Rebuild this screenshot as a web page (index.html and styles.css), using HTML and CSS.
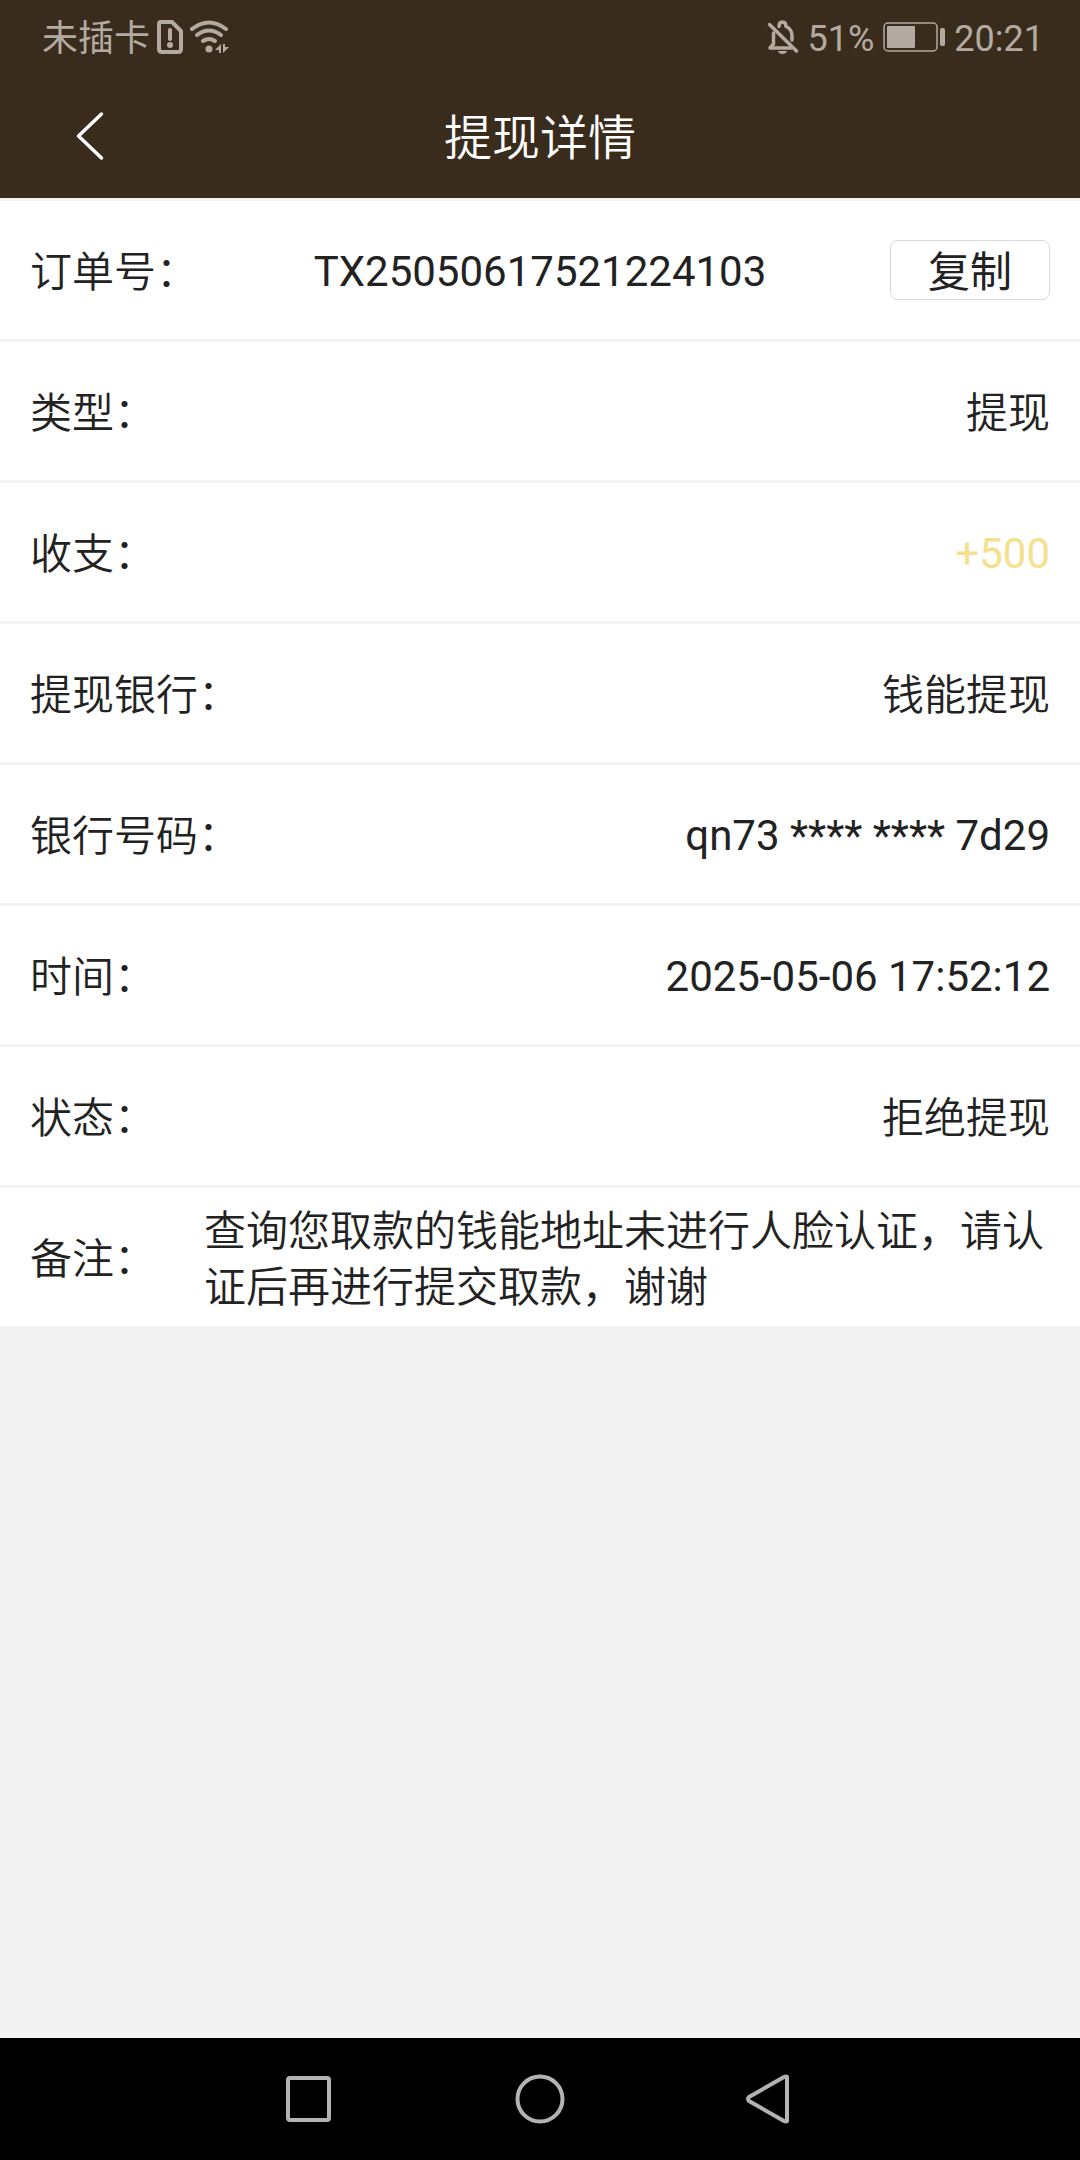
FILE: index.html
```
<!DOCTYPE html>
<html lang="zh-CN">
<head>
    <meta charset="UTF-8">
    <meta name="viewport" content="width=device-width, initial-scale=1.0">
    <title>提现详情</title>
    <link rel="stylesheet" href="styles.css">
</head>
<body>
<header class="header">
    <div class="status-bar">
        <div class="status-left">
            <span class="status-text">未插卡</span>
            <svg class="icon-sim" width="26" height="34" viewBox="0 0 26 34">
                <path d="M4 2H15L24 11V29Q24 32 21 32H5Q2 32 2 29V4Q2 2 4 2Z" fill="none" stroke="#b3aba1" stroke-width="4" stroke-linejoin="round"/>
                <path d="M13 10V19" stroke="#b3aba1" stroke-width="4" stroke-linecap="round"/>
                <circle cx="13" cy="25" r="3" fill="#b3aba1"/>
            </svg>
            <svg class="icon-wifi" width="40" height="34" viewBox="0 0 40 34">
                <g fill="none" stroke="#b3aba1" stroke-width="4" stroke-linecap="round">
                    <path d="M2 9Q19 -4 36 9"/>
                    <path d="M7 15Q19 6 31 15"/>
                    <path d="M13 21Q19 17 25 21"/>
                </g>
                <circle cx="19" cy="29" r="3.5" fill="#b3aba1"/>
                <path d="M31 24V33H29V30H25ZM33 33V24H35V27H39Z" fill="#b3aba1"/>
            </svg>
        </div>
        <div class="status-right">
            <svg class="icon-bell" width="32" height="34" viewBox="0 0 32 34">
                <g fill="none" stroke="#b3aba1" stroke-width="3.5" stroke-linecap="round" stroke-linejoin="round">
                    <path d="M2.500 4.500L29.500 31"/>
                    <path d="M6.500 13V24L3 28H24"/>
                    <path d="M12 6.500Q12 2 15.500 2T19 6.500Q25 9 25 16V20"/>
                </g>
                <path d="M11 31H20Q19 34 15.500 34T11 31Z" fill="#b3aba1"/>
            </svg>
            <span class="status-text">51%</span>
            <svg class="icon-battery" width="62" height="30" viewBox="0 0 62 30">
                <rect x="1" y="1" width="53" height="28" rx="4" fill="none" stroke="#b3aba1" stroke-width="1.500"/>
                <rect x="4" y="4" width="28" height="22" rx="1" fill="#b3aba1"/>
                <rect x="57" y="6" width="5" height="18" rx="2" fill="#b3aba1"/>
            </svg>
            <span class="status-text">20:21</span>
        </div>
    </div>
    <div class="title-bar">
        <button type="button" class="back-btn" aria-label="返回">
            <svg width="28" height="50" viewBox="0 0 28 50">
                <path d="M25.500 3L2.500 25L25.500 47" fill="none" stroke="#fff" stroke-width="3.5" stroke-linecap="round" stroke-linejoin="round"/>
            </svg>
        </button>
        <h1>提现详情</h1>
    </div>
</header>

<main class="details">
    <div class="row order-row">
        <span class="label">订单号：</span>
        <span class="value number">TX25050617521224103</span>
        <button type="button" class="copy-btn">复制</button>
    </div>
    <div class="row">
        <span class="label">类型：</span>
        <span class="value">提现</span>
    </div>
    <div class="row">
        <span class="label">收支：</span>
        <span class="value number amount">+500</span>
    </div>
    <div class="row">
        <span class="label">提现银行：</span>
        <span class="value">钱能提现</span>
    </div>
    <div class="row">
        <span class="label">银行号码：</span>
        <span class="value number">qn73 **** **** 7d29</span>
    </div>
    <div class="row">
        <span class="label">时间：</span>
        <span class="value number">2025-05-06 17:52:12</span>
    </div>
    <div class="row">
        <span class="label">状态：</span>
        <span class="value">拒绝提现</span>
    </div>
    <div class="row">
        <span class="label">备注：</span>
        <span class="value remark">查询您取款的钱能地址未进行人脸认证，请认证后再进行提交取款，谢谢</span>
    </div>
</main>

<nav class="nav-bar">
    <button type="button" aria-label="最近任务">
        <svg width="50" height="50" viewBox="0 0 50 50">
            <rect x="3" y="4" width="41" height="42" rx="2" fill="none" stroke="#b3b3b3" stroke-width="4"/>
        </svg>
    </button>
    <button type="button" aria-label="主页">
        <svg width="50" height="50" viewBox="0 0 50 50">
            <circle cx="25" cy="25" r="22.500" fill="none" stroke="#b3b3b3" stroke-width="4"/>
        </svg>
    </button>
    <button type="button" aria-label="返回">
        <svg width="50" height="50" viewBox="0 0 50 50">
            <path d="M42 3V47Q41 48 39 47L4 27Q2 25 4 23L39 3Q41 2 42 3Z" fill="none" stroke="#b3b3b3" stroke-width="4" stroke-linejoin="round"/>
        </svg>
    </button>
</nav>
</body>
</html>
```
FILE: styles.css
```
* {
    box-sizing: border-box;
}
body {
    margin: 0;
    min-height: 100vh;
    display: flex;
    flex-direction: column;
    background-color: #f3f3f3;
    color: #222;
    font-family: Roboto, 'Noto Sans CJK SC', sans-serif;
    font-size: 42px;
    line-height: 56px;
}
button {
    padding: 0;
    border: none;
    background: none;
    font: inherit;
    color: inherit;
    cursor: pointer;
}
svg {
    display: block;
}
.header {
    background-color: #3a2c1d;
    color: #fff;
}
.status-bar {
    display: flex;
    justify-content: space-between;
    align-items: center;
    height: 74px;
    padding: 0 36px 0 42px;
    color: #b3aba1;
    font-size: 36px;
}
.status-left, .status-right {
    display: flex;
    align-items: center;
}
.status-left {
    gap: 7px;
}
.status-right {
    gap: 9px;
}
.status-text {
    padding-top: 4px;
}
.title-bar {
    display: grid;
    grid-template-columns: 1fr auto 1fr;
    align-items: center;
    height: 124px;
    padding: 0 76px;
}
.back-btn {
    justify-self: start;
}
h1 {
    margin: 0;
    padding-top: 6px;
    font-size: 48px;
    font-weight: 350;
}
.details {
    margin-top: 3px;
}
.row {
    display: flex;
    justify-content: space-between;
    align-items: center;
    min-height: 138px;
    padding: 0 30px;
    background-color: #fff;
}
.row + .row {
    margin-top: 3px;
}
.order-row {
    display: grid;
    grid-template-columns: 1fr auto 1fr;
}
.label, .value {
    padding-top: 6px;
    font-weight: 350;
}
.label {
    flex: none;
}
.number {
    padding-top: 4px;
    font-weight: 400;
}
.amount {
    color: #f5e08e;
}
.remark {
    flex: 1;
    margin-left: 48px;
}
.copy-btn {
    justify-self: end;
    width: 160px;
    height: 60px;
    padding-top: 4px;
    border: 1px solid #d9d9d9;
    border-radius: 8px;
}
.nav-bar {
    display: flex;
    justify-content: center;
    align-items: center;
    gap: 180px;
    height: 122px;
    margin-top: auto;
    background-color: #000;
}
```
